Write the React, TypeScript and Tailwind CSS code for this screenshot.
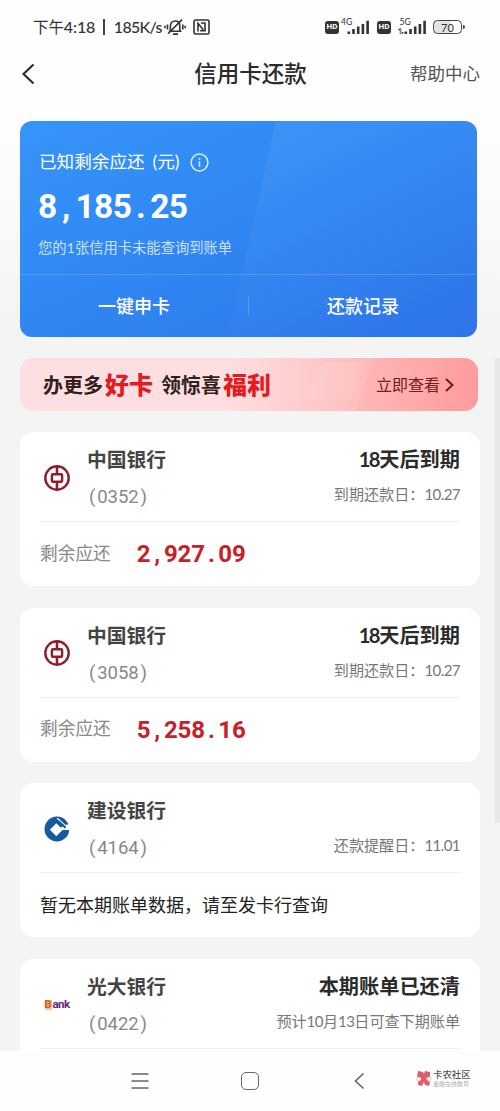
import React from "react";

interface Bill {
  bank: string;
  tail: string;
  logo: React.ReactNode;
  status?: string;
  hint: string;
  amount?: string;
  message?: string;
}

const BocLogo: React.FC = () => (
  <svg className="h-[26px] w-[26px]" viewBox="0 0 26 26" fill="none" stroke="#8f1d2b">
    <circle cx="13" cy="13" r="11.7" strokeWidth="2.4" />
    <rect x="7.9" y="9.2" width="10.2" height="7.6" rx="1" strokeWidth="2.4" />
    <path d="M13 1.5V9M13 17v7.5" strokeWidth="2.6" />
  </svg>
);

const CcbLogo: React.FC = () => (
  <svg className="h-[26px] w-[26px]" viewBox="0 0 26 26">
    <circle cx="12.9" cy="13" r="12.4" fill="#17599f" />
    <path d="M12.3 7.2L18.8 13.7 12.3 20.2 5.8 13.7z" fill="#fff" />
    <path d="M23 8.6H26V13.9H18.6L16.5 11.6z" fill="#fff" />
    <path d="M13.2 2.3L24.6 12.6" stroke="#fff" strokeWidth="1.3" />
    <path d="M14.2 5L21.6 11.8" stroke="#17599f" strokeWidth="2.2" />
  </svg>
);

const EverbrightLogo: React.FC = () => (
  <div className="flex items-end pt-px font-[Roboto] text-[11.5px] leading-[11px] font-bold tracking-[-0.6px] text-[#65277d]">
    <span className="mr-px flex h-[10px] w-[7px] items-center justify-center bg-[#f6c795] text-[11.5px] leading-none font-black tracking-normal text-[#d9632e]">
      B
    </span>
    <span>ank</span>
  </div>
);

const bills: Bill[] = [
  {
    bank: "中国银行",
    tail: "(0352)",
    logo: <BocLogo />,
    status: "18天后到期",
    hint: "到期还款日：10.27",
    amount: "2,927.09",
  },
  {
    bank: "中国银行",
    tail: "(3058)",
    logo: <BocLogo />,
    status: "18天后到期",
    hint: "到期还款日：10.27",
    amount: "5,258.16",
  },
  {
    bank: "建设银行",
    tail: "(4164)",
    logo: <CcbLogo />,
    hint: "还款提醒日：11.01",
    message: "暂无本期账单数据，请至发卡行查询",
  },
  {
    bank: "光大银行",
    tail: "(0422)",
    logo: <EverbrightLogo />,
    status: "本期账单已还清",
    hint: "预计10月13日可查下期账单",
  },
];

// Every character takes the same width, punctuation included
const FixedDigits: React.FC<{ text: string; cell: string }> = ({ text, cell }) => (
  <>
    {text.split("").map((char, i) => (
      <span key={i} className={`inline-block text-center ${cell}`}>
        {char}
      </span>
    ))}
  </>
);

// Pulls the numbers inside Chinese text closer together
const TightNumbers: React.FC<{ text: string; tight: string }> = ({ text, tight }) => (
  <>
    {text.split(/([\d.]+)/).map((part, i) => (
      <span key={i} className={i % 2 ? tight : undefined}>
        {part}
      </span>
    ))}
  </>
);

const SignalBars: React.FC<{ label: string; data?: boolean }> = ({ label, data }) => (
  <svg className="h-[18px] w-[31px]" viewBox="0 0 31 18" fill="#333">
    <text x={data ? 2.5 : 1} y="7.3" fontSize="8.6" fontFamily="Lato">
      {label}
    </text>
    {data && <path d="M2.8 16.2v-4H.8l2.8-2.8v6.8zM5 9.6v4.4h2L4.5 16.6z" />}
    <path d="M7.5 13.4h2.6V16H7.5zM12.2 11h2.6v5h-2.6zM16.9 8.6h2.6V16h-2.6zM21.6 6h2.6v10h-2.6zM26.3 2.8h2.6V16h-2.6z" />
  </svg>
);

const HdBadge: React.FC = () => (
  <span className="flex h-[13px] w-[14px] items-center justify-center rounded-[3px] bg-[#333] font-[Roboto] text-[8px] font-bold text-white">
    HD
  </span>
);

const StatusBar: React.FC = () => (
  <div className="flex h-[54px] items-center justify-between pr-[35px] pl-[33px] text-[#333]">
    <div className="flex items-center">
      <span className="text-[16px] font-medium tracking-[-0.1px] whitespace-pre">
        <span className="text-[15.5px] font-normal">下午</span>4:18
      </span>
      <span className="mr-[9px] ml-[8px] h-[16px] w-[1.5px] bg-[#444]" />
      <span className="text-[16px] font-medium tracking-[-0.7px]">185K/s</span>
      <svg className="ml-[2px] h-[18px] w-[22px]" viewBox="0 0 22 18" fill="none" stroke="#333" strokeWidth="1.6">
        <path d="M4.8 13.2h12.6M6.4 13V8.2C6.4 5 8.4 3 11.3 3s4.5 2 4.5 5V13M18 1.6L4 15.8M9 16.1h5M3.5 6.5v5M1 7.8v2.4M18.8 6.5v5M21.2 7.8v2.4" />
      </svg>
      <svg className="ml-[7px] h-[16px] w-[17px]" viewBox="0 0 17 16" fill="none" stroke="#333" strokeWidth="1.6">
        <rect x="1" y="1" width="15" height="14" rx="1.5" />
        <path d="M5 12.6V4.4l5.2 6.2M8 4h4v7.6H7.2" />
      </svg>
    </div>
    <div className="flex items-center">
      <HdBadge />
      <span className="ml-px flex">
        <SignalBars label="4G" />
      </span>
      <span className="ml-[6px]">
        <HdBadge />
      </span>
      <span className="ml-[6px] flex">
        <SignalBars label="5G" data />
      </span>
      <span className="ml-[5px] flex h-[14px] w-[29px] items-center justify-center rounded-[4.5px] border-[1.5px] border-[#444] bg-gradient-to-r from-[#e4e4e4] from-60% to-white to-65% text-[11px] leading-none">
        70
      </span>
      <span className="ml-px h-[4px] w-[2px] rounded-r bg-[#444]" />
    </div>
  </div>
);

const Header: React.FC = () => (
  <header className="grid h-[40px] grid-cols-3 items-center pr-5 pl-[21px]">
    <svg className="h-[22px] w-[14px]" viewBox="0 0 14 22" fill="none" stroke="#2b2b2b" strokeWidth="2.1">
      <path d="M12.5 1.5L2.5 11l10 9.5" />
    </svg>
    <h1 className="text-center text-[22.5px] font-medium whitespace-nowrap text-[#2b2b2b]">信用卡还款</h1>
    <span className="text-right text-[17.5px] text-[#555]">帮助中心</span>
  </header>
);

const SummaryCard: React.FC = () => (
  <section className="relative mr-[3px] h-[216px] overflow-hidden rounded-xl bg-gradient-to-br from-[#3694f9] via-[#3086f3] to-[#2e74e9] text-white">
    <svg className="absolute inset-0 h-full w-full" viewBox="0 0 457 216" preserveAspectRatio="none">
      <defs>
        <linearGradient id="sheen" x1="0" y1="0" x2="0.6" y2="1">
          <stop offset="0" stopColor="#fff" stopOpacity="0.06" />
          <stop offset="1" stopColor="#fff" stopOpacity="0" />
        </linearGradient>
      </defs>
      <path d="M256 0H457V216H208z" fill="url(#sheen)" />
    </svg>
    <div className="relative h-[154px] border-b border-white/15 pt-[28px] pl-[19px]">
      <div className="flex h-[27px] items-center text-[17.6px] whitespace-pre">
        <span>已知剩余应还</span>
        <span className="ml-[8px]">(元)</span>
        <svg className="ml-[10px] h-[19px] w-[19px]" viewBox="0 0 19 19" fill="none" stroke="#dcefff" strokeWidth="1.5">
          <circle cx="9.5" cy="9.5" r="8.4" />
          <path d="M9.5 8.2v5.6M9.5 5v1.7" />
        </svg>
      </div>
      <div className="mt-[11px] -ml-px flex h-10 items-center font-[Roboto] text-[33.5px] font-bold">
        <FixedDigits text="8,185.25" cell="w-[18.7px]" />
      </div>
      <p className="mt-[11px] -ml-px text-[14.3px] leading-5 whitespace-nowrap text-white/75">
        您的1张信用卡未能查询到账单
      </p>
    </div>
    <div className="relative flex h-[62px] items-center text-center text-[18px] font-medium">
      <span className="flex-1">一键申卡</span>
      <span className="h-[18px] w-px bg-white/20" />
      <span className="flex-1">还款记录</span>
    </div>
  </section>
);

const PromoBanner: React.FC = () => (
  <section className="relative mt-[21px] mr-[2px] flex h-[53px] items-center justify-between overflow-hidden rounded-[14px] bg-gradient-to-r from-[#fedfe1] from-45% to-[#fd9f9f] pr-6 pl-[23px]">
    <svg className="absolute inset-0 h-full w-full" viewBox="0 0 458 53" preserveAspectRatio="none">
      <path d="M305 4h38L331 41h-46z" fill="#fff" opacity=".08" />
      <path d="M353 0h105v53H336z" fill="#f77" opacity=".09" />
    </svg>
    <div className="relative flex items-center leading-none font-bold whitespace-nowrap text-[#321f20]">
      <span className="text-[20px]">办更多</span>
      <span className="ml-[2px] text-[24px] font-black text-[#e21c22]">好卡</span>
      <span className="ml-[8px] text-[20px]">领惊喜</span>
      <span className="ml-[2px] text-[24px] font-black text-[#e21c22]">福利</span>
    </div>
    <div className="relative flex items-center text-[16px] text-[#751a20]">
      立即查看
      <svg className="ml-[5px] h-[14px] w-[9px]" viewBox="0 0 9 14" fill="none" stroke="currentColor" strokeWidth="2">
        <path d="M1 1l6.5 6L1 13" />
      </svg>
    </div>
  </section>
);

const BillCard: React.FC<{ bill: Bill }> = ({ bill }) => (
  <section className="h-[154px] shrink-0 rounded-[14px] bg-white px-5">
    <div className="flex h-[90px] border-b border-[#f0f0f0]">
      <div className="flex w-[34px] items-center justify-center pt-[2px]">{bill.logo}</div>
      <div className="ml-[13px] pt-[12px] whitespace-nowrap">
        <h2 className="h-[30px] text-[19.8px] leading-[30px] font-bold text-[#444]">{bill.bank}</h2>
        <p className="mt-[9px] h-[28px] font-[Roboto] text-[18.5px] leading-[28px] text-[#888]">
          <FixedDigits text={bill.tail} cell="w-[10.3px]" />
        </p>
      </div>
      <div className="ml-auto pt-[12px] text-right whitespace-nowrap">
        <p className="h-[30px] text-[20.2px] leading-[30px] font-bold text-[#2b2b2b]">
          {bill.status && <TightNumbers text={bill.status} tight="tracking-[-1.8px] mr-[0.6px]" />}
        </p>
        <p className="mt-[8px] h-[24px] text-[15.1px] leading-[24px] text-[#777]">
          <TightNumbers text={bill.hint} tight="tracking-[-0.6px]" />
        </p>
      </div>
    </div>
    {bill.amount && (
      <div className="flex h-[64px] items-center">
        <span className="text-[17.7px] text-[#888]">剩余应还</span>
        <span className="ml-[26px] flex font-[Roboto] text-[24px] font-bold text-[#c72029]">
          <FixedDigits text={bill.amount} cell="w-[13.6px]" />
        </span>
      </div>
    )}
    {bill.message && (
      <p className="flex h-[65px] items-center text-[18px] whitespace-nowrap text-[#222]">{bill.message}</p>
    )}
  </section>
);

const NavBar: React.FC = () => (
  <nav className="relative flex h-[60px] items-center bg-[#fefefe]">
    <svg className="ml-[131px] h-[18px] w-[18px]" viewBox="0 0 18 18" stroke="#666" strokeWidth="1.6">
      <path d="M.5 2h17M.5 9h17M.5 16h17" />
    </svg>
    <span className="ml-[92px] h-[18px] w-[18px] rounded-[5px] border-[1.7px] border-[#666]" />
    <svg className="ml-[95px] h-[18px] w-[11px]" viewBox="0 0 11 18" fill="none" stroke="#666" strokeWidth="1.6">
      <path d="M9.5 1.5L1.5 9l8 7.5" />
    </svg>
    <div className="ml-[51px] flex items-center">
      <svg className="mb-[5px] h-[17px] w-[16px]" viewBox="0 0 16 17" fill="#d96069">
        <path d="M2 1l5 1 1 2 1-3 5 1v5l-4 1 2 3 2 1-1 4-4-1-1-3-2 4-4-1V12l3-3-4-2z" />
        <circle cx="3" cy="9" r="2" fill="#fff" stroke="#d99" strokeWidth=".6" />
        <circle cx="13" cy="9" r="2" fill="#fff" stroke="#d99" strokeWidth=".6" />
      </svg>
      <div className="mb-[5px] ml-[1px] leading-none whitespace-nowrap">
        <p className="text-[9.4px] leading-[10px] font-medium text-[#555]">卡农社区</p>
        <p className="text-[6px] leading-[7px] text-[#aaa]">金融在线教育</p>
      </div>
    </div>
  </nav>
);

const App: React.FC = () => {
  return (
    <div
      lang="zh-CN"
      className="relative flex h-[1111px] w-[500px] flex-col overflow-hidden bg-[#f4f4f4] bg-[linear-gradient(#fefefe_0px,#fefefe_115px,#f4f4f4_330px)] font-['Lato','Noto_Sans_CJK_SC',sans-serif]"
    >
      <StatusBar />
      <Header />
      <main className="h-[957px] overflow-hidden pt-[27px] pr-5 pl-5">
        <SummaryCard />
        <PromoBanner />
        <div className="mt-[21px] flex flex-col gap-[21.5px]">
          {bills.map((bill, i) => (
            <BillCard key={i} bill={bill} />
          ))}
        </div>
      </main>
      <NavBar />
      {/* Scroll indicator */}
      <div className="absolute top-[358px] right-0 h-[465px] w-[5px] bg-[#e7e7e7]" />
    </div>
  );
};

export default App;
